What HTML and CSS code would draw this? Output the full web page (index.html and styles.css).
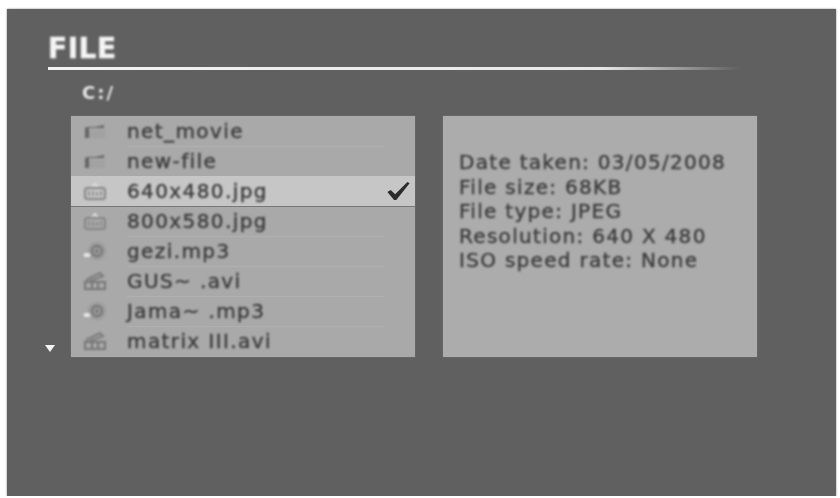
FILE: index.html
```html
<!DOCTYPE html>
<html lang="en">
<head>
    <meta charset="UTF-8">
    <meta name="viewport" content="width=device-width, initial-scale=1.0">
    <title>FILE</title>
    <link rel="stylesheet" href="styles.css">
</head>
<body>
    <svg class="sprites" width="0" height="0">
        <symbol id="i-folder" viewBox="0 0 26 20">
            <path d="M3 17V8q0-2 2-2h8l9-2v3H7v10z" fill="#666"/>
            <path d="M7 9h16v8H7z" fill="#a2a2a2"/>
        </symbol>
        <symbol id="i-image" viewBox="0 0 26 20">
            <path d="M9 8l4-5 4 5" fill="none" stroke="#e0e0e0" stroke-width="2"/>
            <rect x="3" y="7" width="20" height="11" rx="2.5" fill="none" stroke="#858585" stroke-width="2"/>
            <path d="M7 15v-5M11 15v-5M15 15v-4M19 15v-5" stroke="#858585" stroke-width="1.6"/>
        </symbol>
        <symbol id="i-music" viewBox="0 0 26 20">
            <circle cx="15" cy="10" r="9" fill="#9a9a9a"/>
            <circle cx="15" cy="10" r="5" fill="none" stroke="#727272" stroke-width="1.8"/>
            <circle cx="15" cy="10" r="1.6" fill="#6c6c6c"/>
            <ellipse cx="5" cy="14" rx="3.5" ry="2" fill="#e8e8e8"/>
        </symbol>
        <symbol id="i-video" viewBox="0 0 26 20">
            <path d="M4 9l14-7 3 3L8 10" fill="none" stroke="#7c7c7c" stroke-width="2"/>
            <path d="M3 11h20v7H3z" fill="none" stroke="#767676" stroke-width="2"/>
            <path d="M10 11v7M16 11v7" stroke="#767676" stroke-width="2"/>
        </symbol>
    </svg>

    <main class="screen">
        <h1 class="title">FILE</h1>
        <div class="rule"></div>
        <div class="path">C:/</div>

        <div class="browser">
            <div class="pager"><span class="pager-arrow"></span></div>

            <ul class="file-list">
                <li class="file"><svg class="file-icon"><use href="#i-folder"/></svg><span class="file-name">net_movie</span></li>
                <li class="file"><svg class="file-icon"><use href="#i-folder"/></svg><span class="file-name">new-file</span></li>
                <li class="file selected">
                    <svg class="file-icon"><use href="#i-image"/></svg><span class="file-name">640x480.jpg</span>
                    <svg class="check" viewBox="0 0 22 18"><path d="M1 10l3-2 4 4L19 1l2 1L9 17H7z" fill="#2b2b2b"/></svg>
                </li>
                <li class="file"><svg class="file-icon"><use href="#i-image"/></svg><span class="file-name">800x580.jpg</span></li>
                <li class="file"><svg class="file-icon"><use href="#i-music"/></svg><span class="file-name">gezi.mp3</span></li>
                <li class="file"><svg class="file-icon"><use href="#i-video"/></svg><span class="file-name">GUS~ .avi</span></li>
                <li class="file"><svg class="file-icon"><use href="#i-music"/></svg><span class="file-name">Jama~ .mp3</span></li>
                <li class="file"><svg class="file-icon"><use href="#i-video"/></svg><span class="file-name">matrix III.avi</span></li>
            </ul>

            <div class="details">
                <p>Date taken: 03/05/2008</p>
                <p>File size: 68KB</p>
                <p>File type: JPEG</p>
                <p>Resolution: 640 X 480</p>
                <p>ISO speed rate: None</p>
            </div>
        </div>
    </main>
</body>
</html>
```

FILE: styles.css
```css
body {
    margin: 0;
    background-color: #fff;
    font-family: "DejaVu Sans", "Liberation Sans", sans-serif;
}

.sprites {
    display: block;
}

.screen {
    box-sizing: border-box;
    width: 829px;
    height: 487px;
    margin: 9px 0 0 7px;
    padding: 25px 0 0 41px;
    background-color: #606060;
    box-shadow: 0 0 2px #888;
}

.title {
    margin: 0;
    font-size: 28px;
    line-height: 30px;
    font-weight: bold;
    letter-spacing: 0.5px;
    color: #f4f4f4;
    -webkit-text-stroke: 0.5px #f4f4f4;
    filter: blur(0.8px);
}

.rule {
    width: 692px;
    height: 3px;
    margin-top: 3px;
    background: linear-gradient(to right, #f2f2f2 0%, #e8e8e8 80%, #606060 100%);
    filter: blur(0.5px);
}

.path {
    margin: 14px 0 0 34px;
    font-size: 18px;
    line-height: 18px;
    font-weight: bold;
    letter-spacing: 2px;
    color: #e8e8e8;
    filter: blur(0.8px);
}

.browser {
    display: flex;
    margin-top: 14px;
}

.pager {
    display: flex;
    align-items: flex-end;
    width: 23px;
    padding-bottom: 5px;
}

.pager-arrow {
    width: 0;
    height: 0;
    margin-left: -3px;
    border-left: 5px solid transparent;
    border-right: 5px solid transparent;
    border-top: 7px solid #f4f4f4;
    filter: blur(0.7px);
}

.file-list {
    width: 344px;
    height: 241px;
    margin: 0;
    padding: 0;
    list-style: none;
    background-color: #a9a9a9;
    box-shadow: 0 0 1px #888;
}

.file {
    display: flex;
    align-items: center;
    height: 30px;
    padding-left: 11px;
    position: relative;
    font-size: 20px;
    color: #3c3c3c;
}

.file + .file::before {
    content: "";
    position: absolute;
    left: 56px;
    right: 30px;
    top: 0;
    height: 1px;
    background-color: #b0b0b0;
}

.selected {
    background-color: #c6c6c6;
    box-shadow: 0 1px 0 #777;
}

.file.selected::before,
.selected + .file::before {
    display: none;
}

.file-icon {
    flex: none;
    width: 26px;
    height: 20px;
    margin-right: 19px;
    filter: blur(0.8px);
}

.file-name {
    letter-spacing: 1.4px;
    -webkit-text-stroke: 0.4px #3c3c3c;
    filter: blur(0.9px);
}

.check {
    width: 25px;
    height: 20px;
    margin-left: auto;
    margin-right: 4px;
    filter: blur(0.5px);
}

.details {
    box-sizing: border-box;
    width: 314px;
    height: 241px;
    margin-left: 28px;
    padding: 34px 0 0 16px;
    background-color: #acacac;
    box-shadow: 0 0 1px #888;
    color: #3c3c3c;
    font-size: 20px;
}

.details p {
    margin: 0;
    line-height: 24.5px;
    letter-spacing: 1.3px;
    -webkit-text-stroke: 0.4px #3c3c3c;
    filter: blur(0.9px);
}
```
